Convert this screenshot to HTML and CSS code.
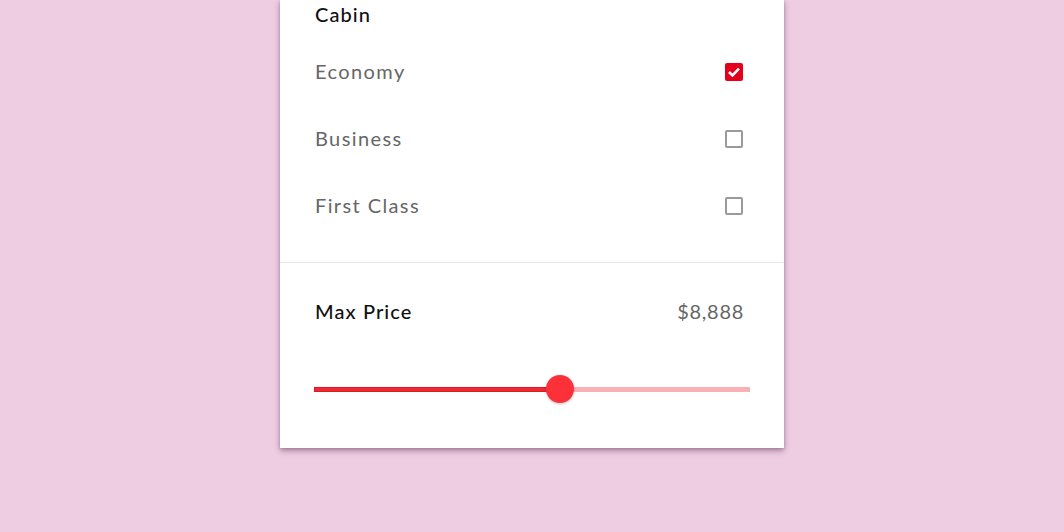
FILE: index.html
```html
<!DOCTYPE html>
<html>
<head>
<meta charset="utf-8">
<link rel="stylesheet" href="styles.css">
</head>
<body>
<div class="card">
  <section class="section cabin">
    <h2 class="heading">Cabin</h2>
    <ul class="options">
      <li class="option"><span class="label">Economy</span><span class="check checked"><svg viewBox="0 0 18 18" width="18" height="18"><path d="M4 9 L7.5 12.5 L14 5.6" fill="none" stroke="#fff" stroke-width="2.6"/></svg></span></li>
      <li class="option"><span class="label">Business</span><span class="check"></span></li>
      <li class="option"><span class="label">First Class</span><span class="check"></span></li>
    </ul>
  </section>
  <section class="section price">
    <div class="price-row">
      <h2 class="heading">Max Price</h2>
      <span class="value">$8,888</span>
    </div>
    <div class="slider">
      <div class="track"><div class="active" style="width:56.4%"></div></div>
      <div class="thumb" style="left:56.4%"></div>
    </div>
  </section>
</div>
</body>
</html>
```
FILE: styles.css
```css
html, body { margin: 0; padding: 0; }
body {
  background: #eecce2;
  height: 532px;
  overflow: hidden;
  font-family: Lato, "Noto Sans", sans-serif;
}
.card {
  width: 504px;
  margin: 0 auto;
  background: #fff;
  box-shadow: 0 3px 6px rgba(60, 20, 50, 0.35), 0 1px 3px rgba(60,20,50,0.2);
}
.section { padding: 0 40px 0 35px; }
.cabin { padding-bottom: 23px; border-bottom: 1px solid #ebe3e8; }
.heading {
  margin: 0;
  font-size: 20px;
  font-weight: 500;
  line-height: 28px;
  padding-bottom: 2px;
  color: #111;
  letter-spacing: 1.1px;
}
.options { list-style: none; margin: 8px 0 0; padding: 0; }
.option {
  height: 67px;
  display: flex;
  align-items: center;
  justify-content: space-between;
}
.label {
  font-size: 20px;
  line-height: 24px;
  padding-bottom: 2px;
  color: #666;
  letter-spacing: 1.4px;
}
.check {
  width: 18px;
  height: 18px;
  box-sizing: border-box;
  border: 2px solid #9a9a9a;
  border-radius: 2px;
  margin-right: 1px;
  position: relative;
}
.check.checked {
  background: #e2001d;
  border-color: #e2001d;
}
.check svg { position: absolute; left: -2px; top: -2px; }
.price { padding-top: 34px; padding-bottom: 45px; }
.price-row {
  display: flex;
  justify-content: space-between;
  align-items: center;
  height: 30px;
}
.value {
  font-size: 20px;
  line-height: 24px;
  padding-bottom: 2px;
  color: #666;
  letter-spacing: 0.7px;
}
.slider {
  position: relative;
  height: 28px;
  margin: 48px -6px 0 -1px;
  display: flex;
  align-items: center;
}
.track {
  width: 100%;
  height: 5px;
  background: #f9b1b6;
  position: relative;
}
.active {
  height: 100%;
  background: #ee2a32;
  box-shadow: inset 0 0 0 1px #dc1c24;
}
.thumb {
  position: absolute;
  top: 0;
  width: 28px;
  height: 28px;
  margin-left: -14px;
  border-radius: 50%;
  background: #fc3039;
  box-shadow: 0 1px 3px rgba(0,0,0,0.25);
}
```
